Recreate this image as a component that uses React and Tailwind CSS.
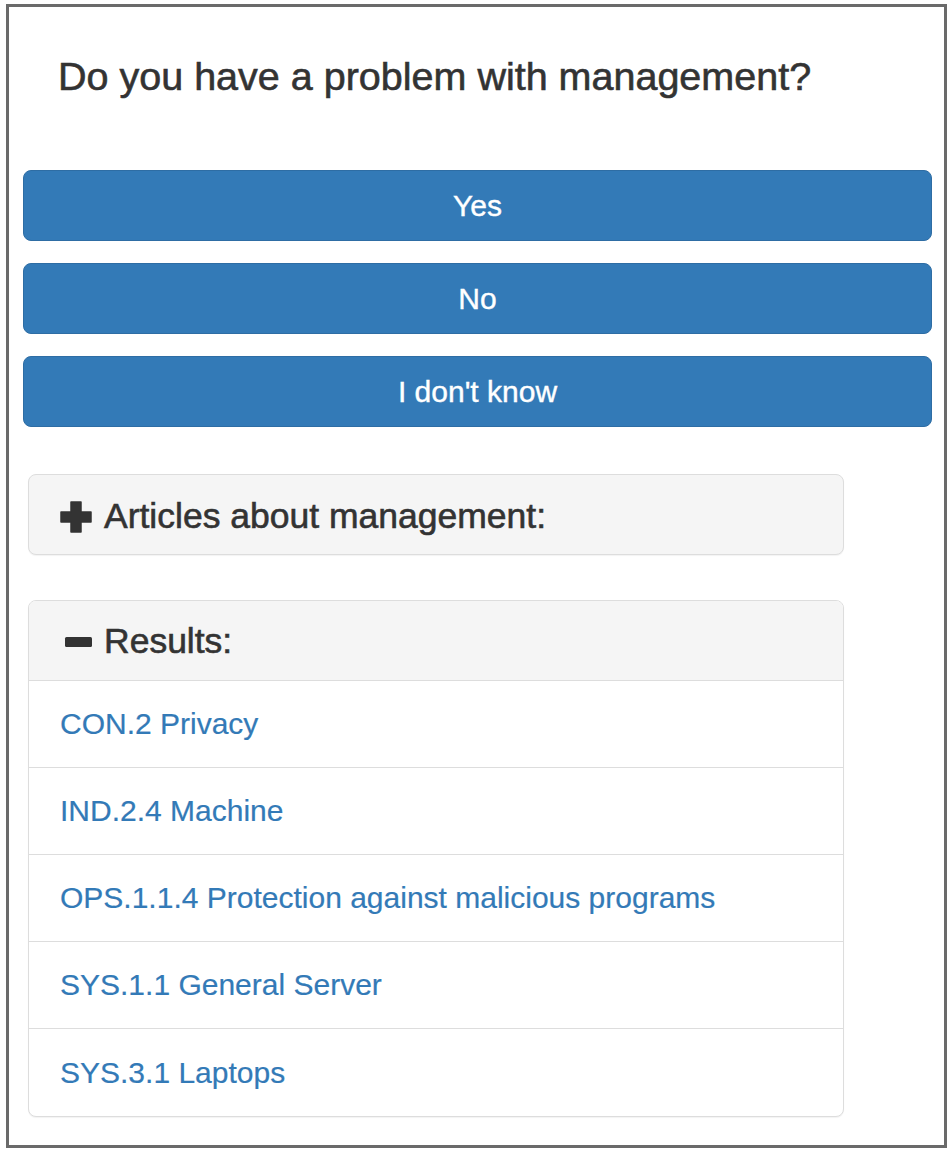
import React from 'react';

const results = [
  'CON.2 Privacy',
  'IND.2.4 Machine',
  'OPS.1.1.4 Protection against malicious programs',
  'SYS.1.1 General Server',
  'SYS.3.1 Laptops',
];

const PlusIcon = () => (
  <svg width="32" height="32" viewBox="0 0 32 32" className="shrink-0">
    <path
      d="M11 1h10v10h10v10H21v10H11V21H1V11h10z"
      fill="#333"
      stroke="#333"
      strokeWidth="1.5"
      strokeLinejoin="round"
    />
  </svg>
);

const MinusIcon = () => (
  <svg width="32" height="32" viewBox="0 0 32 32" className="shrink-0">
    <rect x="5" y="11" width="27" height="10" rx="1.5" fill="#333" />
  </svg>
);

export default function App() {
  const buttons = ['Yes', 'No', "I don't know"];

  return (
    <div className="w-[950px] h-[1154px] bg-white pt-[4px] pl-[6px] font-['Liberation_Sans',Arial,sans-serif] text-[#333]">
      <div className="w-[941px] h-[1144px] border-[3px] border-[#6a6a6a] bg-white">
        {/* Question */}
        <h3 className="mt-[48px] ml-[49px] text-[39.5px] leading-[43px] text-[#333] [-webkit-text-stroke:0.6px_#333]">
          Do you have a problem with management?
        </h3>

        {/* Answers */}
        <div className="mt-[72px] ml-[14px] w-[909px] flex flex-col gap-[22px]">
          {buttons.map((b) => (
            <button
              key={b}
              className="h-[71px] w-full rounded-[8px] bg-[#337ab7] border border-[#2e6da4] text-white text-[30px] leading-none [-webkit-text-stroke:0.4px_#fff]"
            >
              {b}
            </button>
          ))}
        </div>

        {/* Articles panel */}
        <div className="mt-[47px] ml-[19px] w-[816px] h-[81px] rounded-[8px] border border-[#ddd] bg-[#f5f5f5] shadow-[0_1px_1px_rgba(0,0,0,0.05)] flex items-center pl-[31px] pt-[4px] gap-[12px]">
          <PlusIcon />
          <span className="text-[35.5px] leading-none [-webkit-text-stroke:0.6px_#333]">Articles about management:</span>
        </div>

        {/* Results panel */}
        <div className="mt-[45px] ml-[19px] w-[816px] rounded-[8px] border border-[#ddd] bg-white shadow-[0_1px_1px_rgba(0,0,0,0.05)] overflow-hidden">
          <div className="h-[80px] bg-[#f5f5f5] border-b border-[#ddd] flex items-center pl-[31px] pt-[3px] gap-[12px]">
            <MinusIcon />
            <span className="text-[35.5px] leading-none [-webkit-text-stroke:0.6px_#333]">Results:</span>
          </div>
          {results.map((r, i) => (
            <div
              key={r}
              className={
                'h-[87px] flex items-center pl-[31px] ' +
                (i < results.length - 1 ? 'border-b border-[#ddd]' : '')
              }
            >
              <a href="#" className="text-[30px] leading-none text-[#337ab7] [-webkit-text-stroke:0.2px_#337ab7]">
                {r}
              </a>
            </div>
          ))}
        </div>
      </div>
    </div>
  );
}
